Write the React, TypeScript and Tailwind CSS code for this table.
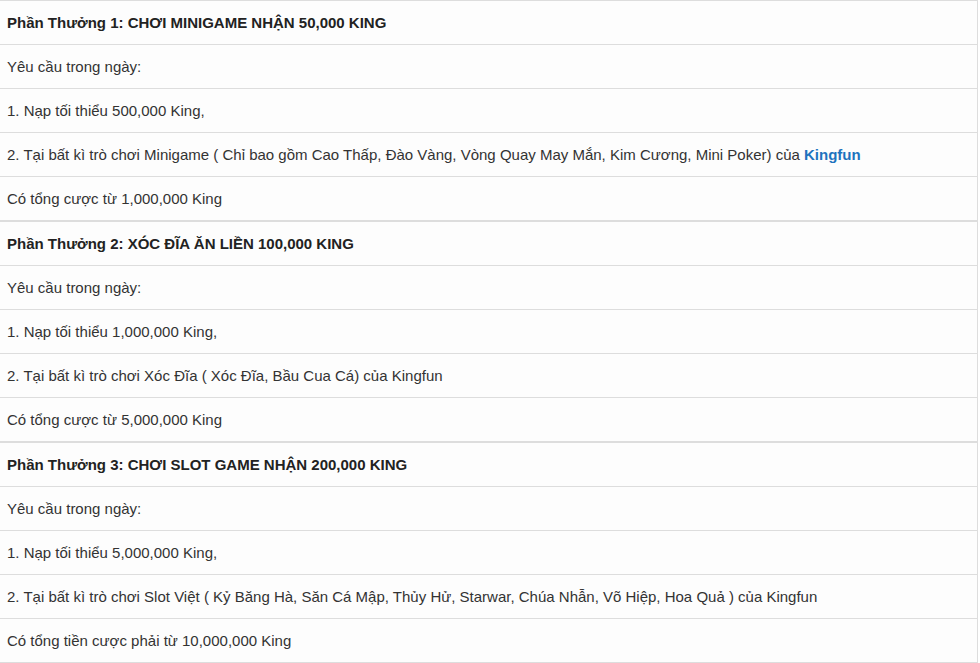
import React from "react";

type Cell = { text: React.ReactNode; bold?: boolean };

const sections: Cell[][] = [
  [
    { text: "Phần Thưởng 1: CHƠI MINIGAME NHẬN 50,000 KING", bold: true },
    { text: "Yêu cầu trong ngày:" },
    { text: "1. Nạp tối thiểu 500,000 King," },
    {
      text: (
        <>
          2. Tại bất kì trò chơi Minigame ( Chỉ bao gồm Cao Thấp, Đào Vàng, Vòng Quay May Mắn, Kim Cương, Mini Poker) của{" "}
          <a className="font-bold text-[#1e73be]">Kingfun</a>
        </>
      ),
    },
    { text: "Có tổng cược từ 1,000,000 King" },
  ],
  [
    { text: "Phần Thưởng 2: XÓC ĐĨA ĂN LIỀN 100,000 KING", bold: true },
    { text: "Yêu cầu trong ngày:" },
    { text: "1. Nạp tối thiểu 1,000,000 King," },
    { text: "2. Tại bất kì trò chơi Xóc Đĩa ( Xóc Đĩa, Bầu Cua Cá) của Kingfun" },
    { text: "Có tổng cược từ 5,000,000 King" },
  ],
  [
    { text: "Phần Thưởng 3: CHƠI SLOT GAME NHẬN 200,000 KING", bold: true },
    { text: "Yêu cầu trong ngày:" },
    { text: "1. Nạp tối thiểu 5,000,000 King," },
    {
      text: "2. Tại bất kì trò chơi Slot Việt ( Kỷ Băng Hà, Săn Cá Mập, Thủy Hử, Starwar, Chúa Nhẫn, Võ Hiệp, Hoa Quả ) của Kingfun",
    },
    { text: "Có tổng tiền cược phải từ 10,000,000 King" },
  ],
];

export default function App() {
  return (
    <div
      className="w-[978px] bg-[#fdfdfd] border-r border-b border-[#dddddd] text-[15px] leading-[20px] text-[#333333]"
      style={{ fontFamily: '"Liberation Sans", Arial, sans-serif' }}
    >
      {sections.map((rows, si) => (
        <div key={si}>
          {rows.map((cell, ri) => {
            const thick = si > 0 && ri === 0;
            return (
              <div
                key={ri}
                className={
                  thick
                    ? "flex h-[45px] items-center border-t-2 border-[#dddddd] pl-[7px] pr-2"
                    : "flex h-[44px] items-center border-t border-[#dddddd] pl-[7px] pr-2"
                }
              >
                <span className={cell.bold ? "font-bold text-[#222222]" : ""}>{cell.text}</span>
              </div>
            );
          })}
        </div>
      ))}
    </div>
  );
}
